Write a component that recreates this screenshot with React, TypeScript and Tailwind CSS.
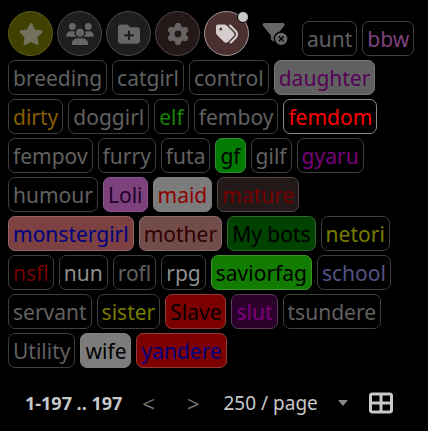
import { useState } from 'react';
import {
  FaFilterCircleXmark,
  FaFolderPlus,
  FaGear,
  FaStar,
  FaTableCellsLarge,
  FaTags,
  FaUsers,
} from 'react-icons/fa6';

interface Tag {
  name: string;
  style?: string;
}

const defaultStyle = 'border-[#3e3e3e] text-[#606060]';

const tags: Tag[] = [
  { name: 'aunt' },
  { name: 'bbw', style: 'border-[#3e3e3e] text-[#7f427d]' },
  { name: 'breeding' },
  { name: 'catgirl' },
  { name: 'control' },
  { name: 'daughter', style: 'border-[#767676] bg-[#606060] text-[#560058]' },
  { name: 'dirty', style: 'border-[#3e3e3e] text-[#855e00]' },
  { name: 'doggirl' },
  { name: 'elf', style: 'border-[#3e3e3e] text-[#168400]' },
  { name: 'femboy' },
  { name: 'femdom', style: 'border-[#8a8a8a] text-[#ff0000]' },
  { name: 'fempov' },
  { name: 'furry' },
  { name: 'futa' },
  { name: 'gf', style: 'border-[#358c35] bg-[#007a00] text-black' },
  { name: 'gilf' },
  { name: 'gyaru', style: 'border-[#3e3e3e] text-[#78007c]' },
  { name: 'humour' },
  { name: 'Loli', style: 'border-[#8c5590] bg-[#7d417d] text-[#22002a]' },
  { name: 'maid', style: 'border-[#808080] bg-[#7c7c7c] text-[#8c0000]' },
  { name: 'mature', style: 'border-[#4f4a4a] bg-[#231919] text-[#780000]' },
  { name: 'monstergirl', style: 'border-[#926464] bg-[#7d4141] text-[#000080]' },
  { name: 'mother', style: 'border-[#876a6a] bg-[#724b4b] text-[#300000]' },
  { name: 'My bots', style: 'border-[#336333] bg-[#004200] text-black' },
  { name: 'netori', style: 'border-[#3e3e3e] text-[#787c00]' },
  { name: 'nsfl', style: 'border-[#3e3e3e] text-[#740000]' },
  { name: 'nun', style: 'border-[#3e3e3e] text-[#8e8e8e]' },
  { name: 'rofl' },
  { name: 'rpg', style: 'border-[#3e3e3e] text-[#8e8e8e]' },
  { name: 'saviorfag', style: 'border-[#429030] bg-[#127c00] text-black' },
  { name: 'school', style: 'border-[#3e3e3e] text-[#535384]' },
  { name: 'servant' },
  { name: 'sister', style: 'border-[#3e3e3e] text-[#787c00]' },
  { name: 'Slave', style: 'border-[#923b3b] bg-[#7d0000] text-black' },
  { name: 'slut', style: 'border-[#573b57] bg-[#2b002b] text-[#7d007d]' },
  { name: 'tsundere' },
  { name: 'Utility' },
  { name: 'wife', style: 'border-[#808080] bg-[#7c7c7c] text-black' },
  { name: 'yandere', style: 'border-[#923b3b] bg-[#7d0000] text-[#000080]' },
];

const filters = [
  { label: 'Favorites', Icon: FaStar, style: 'border-[#5d5d20] bg-[#404000] text-[#71715c]' },
  { label: 'Groups', Icon: FaUsers, style: 'border-[#4b4b4b] bg-[#1e1e1e] text-[#666666]' },
  { label: 'Folders', Icon: FaFolderPlus, style: 'border-[#4b4b4b] bg-[#1e1e1e] text-[#666666]' },
  { label: 'Manage tags', Icon: FaGear, style: 'border-[#504747] bg-[#251818] text-[#676363]' },
];

export default function App() {
  const [showTags, setShowTags] = useState(true);

  return (
    <main className="min-h-screen bg-black px-2 pt-[11px] font-['Noto_Sans',sans-serif]">
      <div className="flex flex-wrap items-end gap-x-[5px] gap-y-1">
        <div className="flex gap-1">
          {filters.map(({ label, Icon, style }) => (
            <button
              key={label}
              aria-label={label}
              className={`flex size-[45px] items-center justify-center rounded-full border ${style}`}
            >
              <Icon className="h-[22px] w-7" />
            </button>
          ))}
          <button
            aria-label="Show tag list"
            aria-pressed={showTags}
            onClick={() => setShowTags(!showTags)}
            className="relative flex size-[45px] items-center justify-center rounded-full border border-[#a39696] bg-[#4b3030] text-[#d5cdcd]"
          >
            <FaTags className="size-[22px]" />
            <span className="absolute -top-px -right-px size-3 rounded-full border border-black bg-[#c8c8c8]" />
          </button>
          <button
            aria-label="Clear all filters"
            className="flex h-[45px] w-11 items-center justify-center text-[#666666]"
          >
            <FaFilterCircleXmark className="h-[22px] w-7" />
          </button>
        </div>

        {showTags &&
          tags.map((tag) => (
            <button
              key={tag.name}
              className={`h-[35px] rounded-[7px] border px-1 text-[21px] leading-[35px] ${tag.style ?? defaultStyle}`}
            >
              {tag.name}
            </button>
          ))}
      </div>

      <nav className="mt-[15px] flex h-10 items-center pl-[17px] text-[#c8c8c8]">
        <span className="text-lg font-bold whitespace-nowrap">1-197 .. 197</span>
        <button aria-label="Previous page" className="ml-5 text-[22px] text-[#707070]">
          &lt;
        </button>
        <button aria-label="Next page" className="ml-8 text-[22px] text-[#707070]">
          &gt;
        </button>
        <div className="relative ml-6 flex items-center">
          <select
            aria-label="Page size"
            defaultValue="250"
            className="w-[124px] appearance-none bg-black text-[19px]"
          >
            <option value="100">100 / page</option>
            <option value="250">250 / page</option>
            <option value="500">500 / page</option>
          </select>
          <svg
            viewBox="0 0 10 6"
            className="pointer-events-none absolute right-0 h-[6px] w-[10px] fill-[#888888]"
          >
            <path d="M0 0h10L5 6z" />
          </svg>
        </div>
        <button aria-label="Toggle grid view" className="ml-[21px]">
          <FaTableCellsLarge className="size-6" />
        </button>
      </nav>
    </main>
  );
}
